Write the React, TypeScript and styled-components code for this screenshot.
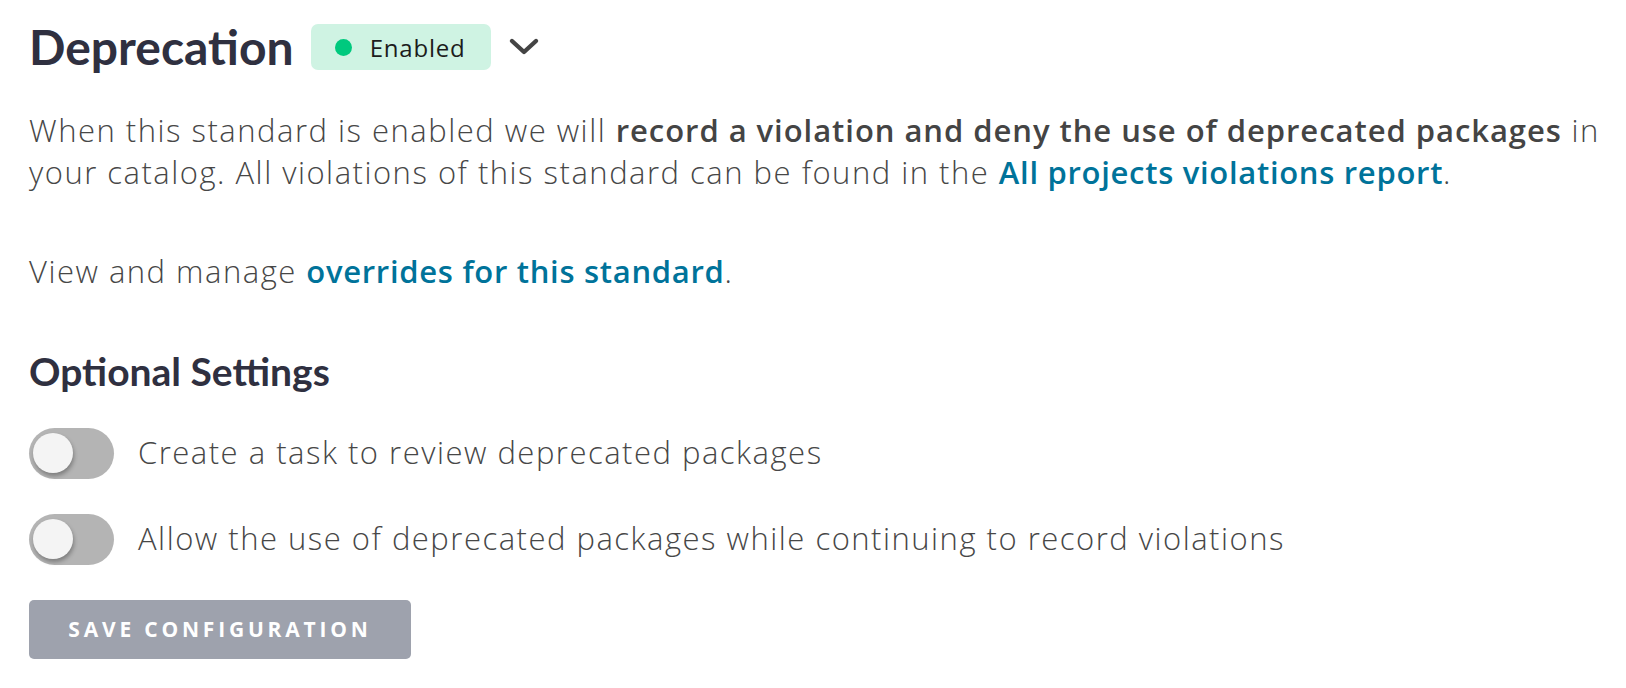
import React, { useState } from 'react';
import styled, { createGlobalStyle } from 'styled-components';

const GlobalStyle = createGlobalStyle`
  body {
    margin: 0;
    background: #ffffff;
    font-family: 'Open Sans', 'Noto Sans', sans-serif;
  }
`;

const Page = styled.div`
  padding: 24px 20px 24px 29px;
`;

const TitleRow = styled.div`
  display: flex;
  align-items: center;
  height: 46px;
`;

const Title = styled.h1`
  margin: 0 17px 0 0;
  font-family: Lato, 'Noto Sans', sans-serif;
  font-weight: 700;
  font-size: 48px;
  line-height: 46px;
  color: #2f3040;
`;

const Badge = styled.span`
  display: inline-flex;
  align-items: center;
  gap: 18px;
  height: 46px;
  padding: 0 25px 0 24px;
  border-radius: 7px;
  background: #cff3e3;
  font-size: 24px;
  font-weight: 400;
  color: #1c1c1c;
  letter-spacing: 0.8px;
`;

const Dot = styled.span`
  width: 17px;
  height: 17px;
  border-radius: 50%;
  background: #00c97e;
`;

const Chevron = styled.button`
  display: flex;
  align-items: center;
  margin-left: 17px;
  padding: 0;
  border: none;
  background: none;
  cursor: pointer;
`;

const Text = styled.p<{ $gap: number }>`
  margin: ${(p) => p.$gap}px 0 0;
  font-size: 31px;
  line-height: 41.5px;
  font-weight: 300;
  color: #474747;
  letter-spacing: 1.5px;
`;

const Strong = styled.strong`
  font-weight: 600;
  color: #444444;
  letter-spacing: 0.95px;
`;

const Link = styled.a`
  font-weight: 600;
  color: #00739a;
  text-decoration: none;
  letter-spacing: 0.7px;
`;

const SubTitle = styled.h2`
  margin: 55px 0 0;
  font-family: Lato, 'Noto Sans', sans-serif;
  font-weight: 700;
  font-size: 39px;
  line-height: 46px;
  color: #2f3040;
`;

const Options = styled.div`
  display: flex;
  flex-direction: column;
  gap: 35px;
  margin-top: 34px;
`;

const OptionRow = styled.label`
  display: flex;
  align-items: center;
  gap: 24px;
  cursor: pointer;
`;

const Track = styled.span<{ $on: boolean }>`
  position: relative;
  flex: none;
  width: 85px;
  height: 51px;
  border-radius: 26px;
  background: ${(p) => (p.$on ? '#00c97e' : '#b4b4b4')};
`;

const Knob = styled.span<{ $on: boolean }>`
  position: absolute;
  top: 5px;
  left: ${(p) => (p.$on ? '42px' : '4px')};
  width: 40px;
  height: 40px;
  border-radius: 50%;
  background: #f4f4f4;
  box-shadow: 1px 3px 4px rgba(0, 0, 0, 0.3);
`;

const OptionText = styled.span`
  font-size: 31px;
  line-height: 41.5px;
  font-weight: 300;
  color: #474747;
  letter-spacing: 1.5px;
`;

const SaveButton = styled.button`
  display: block;
  margin-top: 35px;
  width: 382px;
  height: 59px;
  padding: 0;
  border: none;
  border-radius: 5px;
  background: #9ea2ad;
  color: #ffffff;
  font-family: 'Open Sans', 'Noto Sans', sans-serif;
  font-weight: 700;
  font-size: 21px;
  letter-spacing: 3.8px;
  text-transform: uppercase;
`;

const options = [
  'Create a task to review deprecated packages',
  'Allow the use of deprecated packages while continuing to record violations',
];

const App: React.FC = () => {
  const [checked, setChecked] = useState<boolean[]>([false, false]);
  const toggle = (idx: number) =>
    setChecked((prev) => prev.map((v, i) => (i === idx ? !v : v)));

  return (
    <>
      <GlobalStyle />
      <Page>
        <TitleRow>
          <Title>Deprecation</Title>
          <Badge>
            <Dot />
            Enabled
          </Badge>
          <Chevron type='button' aria-label='Toggle menu'>
            <svg width='32' height='22' viewBox='0 0 32 22'>
              <path
                d='M4 5 L16 16 L28 5'
                fill='none'
                stroke='#444'
                strokeWidth='4.4'
                strokeLinecap='round'
                strokeLinejoin='round'
              />
            </svg>
          </Chevron>
        </TitleRow>
        <Text $gap={40}>
          When this standard is enabled we will{' '}
          <Strong>record a violation and deny the use of deprecated packages</Strong> in
          your catalog. All violations of this standard can be found in the{' '}
          <Link href='#'>All projects violations report</Link>.
        </Text>
        <Text $gap={58}>
          View and manage <Link href='#'>overrides for this standard</Link>.
        </Text>
        <SubTitle>Optional Settings</SubTitle>
        <Options>
          {options.map((label, idx) => (
            <OptionRow key={label} onClick={() => toggle(idx)}>
              <Track $on={checked[idx]}>
                <Knob $on={checked[idx]} />
              </Track>
              <OptionText>{label}</OptionText>
            </OptionRow>
          ))}
        </Options>
        <SaveButton type='button'>Save configuration</SaveButton>
      </Page>
    </>
  );
};

export default App;
